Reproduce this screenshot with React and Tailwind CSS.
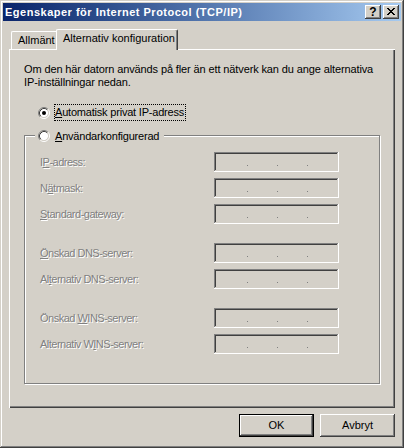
import React from "react";

// classic Win2000 bevels
const frameBevel =
  "shadow-[inset_-1px_-1px_#404040,inset_1px_1px_#d4d0c8,inset_-2px_-2px_#808080,inset_2px_2px_#ffffff]";
const raisedBevel =
  "shadow-[inset_-1px_-1px_#404040,inset_1px_1px_#ffffff,inset_-2px_-2px_#808080,inset_2px_2px_#d4d0c8]";
const sunkenBevel =
  "shadow-[inset_-1px_-1px_#ffffff,inset_1px_1px_#808080,inset_-2px_-2px_#d4d0c8,inset_2px_2px_#404040]";
const disabledText = "text-[#808080] [text-shadow:1px_1px_0_#ffffff]";

const rows = [
  [
    ["I", "P", "-adress:"],
    ["N", "ä", "tmask:"],
    ["", "S", "tandard-gateway:"],
  ],
  [
    ["", "Ö", "nskad DNS-server:"],
    ["Al", "t", "ernativ DNS-server:"],
  ],
  [
    ["Önskad ", "W", "INS-server:"],
    ["Alternativ W", "I", "NS-server:"],
  ],
];

function Radio({ checked }) {
  return (
    <svg width="12" height="12" viewBox="0 0 12 12" className="block shrink-0">
      <circle cx="6" cy="6" r="4.2" fill="#ffffff" />
      <path d="M2.11 9.89A5.5 5.5 0 0 1 9.89 2.11" fill="none" stroke="#808080" />
      <path d="M9.89 2.11A5.5 5.5 0 0 1 2.11 9.89" fill="none" stroke="#ffffff" />
      <path d="M2.82 9.18A4.5 4.5 0 0 1 9.18 2.82" fill="none" stroke="#404040" />
      <path d="M9.18 2.82A4.5 4.5 0 0 1 2.82 9.18" fill="none" stroke="#d4d0c8" />
      {checked && <circle cx="6" cy="6" r="2" fill="#000000" />}
    </svg>
  );
}

function IpField() {
  return (
    <div
      className={`flex h-[20px] w-[125px] shrink-0 items-start gap-[29px] pl-[33px] pt-[13px] ${sunkenBevel}`}
    >
      <span className="h-px w-px bg-[#808080]" />
      <span className="h-px w-px bg-[#808080]" />
      <span className="h-px w-px bg-[#808080]" />
    </div>
  );
}

function CloseGlyph() {
  return (
    <svg width="8" height="7" viewBox="0 0 8 7" shapeRendering="crispEdges">
      <path
        d="M0 0h2v1H0zM6 0h2v1H6zM1 1h2v1H1zM5 1h2v1H5zM2 2h4v1H2zM3 3h2v1H3zM2 4h4v1H2zM1 5h2v1H1zM5 5h2v1H5zM0 6h2v1H0zM6 6h2v1H6z"
        fill="#000000"
      />
    </svg>
  );
}

export default function App() {
  return (
    <div
      className={`flex h-[448px] w-[404px] flex-col bg-[#d4d0c8] p-[3px] font-['Liberation_Sans',Arial,sans-serif] text-[11px] leading-[13px] text-black ${frameBevel}`}
    >
      {/* title bar */}
      <div className="flex h-[18px] shrink-0 items-center bg-gradient-to-r from-[#0a246a] to-[#a6caf0] pl-[2px]">
        <span className="whitespace-nowrap text-[11px] font-bold tracking-[0.5px] text-white">
          Egenskaper för Internet Protocol (TCP/IP)
        </span>
        <div className="ml-auto mr-[2px] flex gap-[2px]">
          <div
            className={`flex h-[14px] w-[16px] items-center justify-center bg-[#d4d0c8] pb-[1px] text-[12px] font-bold leading-none ${raisedBevel}`}
          >
            ?
          </div>
          <div
            className={`flex h-[14px] w-[16px] items-center justify-center bg-[#d4d0c8] pb-[1px] ${raisedBevel}`}
          >
            <CloseGlyph />
          </div>
        </div>
      </div>

      {/* tabs */}
      <div className="ml-[8px] mt-[8px] flex h-[20px] items-end">
        <div className="flex h-[18px] w-[45px] items-start rounded-tl-[2px] border-l border-t border-white pl-[6px] pt-[2px]">
          Allmänt
        </div>
        <div className="relative z-10 -mb-px flex h-[21px] w-[122px] items-start rounded-t-[2px] border-l border-r border-t border-l-white border-r-[#404040] border-t-white bg-[#d4d0c8] pl-[6px] pt-[2px] shadow-[inset_-1px_0_#808080]">
          Alternativ konfiguration
        </div>
      </div>

      {/* tab panel */}
      <div
        className={`mx-[6px] flex h-[359px] shrink-0 flex-col pl-[15px] pt-[14px] shadow-[inset_1px_1px_#ffffff,inset_-1px_-1px_#404040,inset_-2px_-2px_#808080]`}
      >
        <p className="whitespace-nowrap tracking-[-0.12px]">
          Om den här datorn används på fler än ett nätverk kan du ange alternativa
          <br />
          IP-inställningar nedan.
        </p>

        <div className="ml-[14px] mt-[15px] flex h-[17px] items-center gap-[4px]">
          <Radio checked />
          <span className="h-[17px] whitespace-nowrap border border-dotted border-black pr-[1px] leading-[15px] tracking-[-0.2px]">
            <span className="underline underline-offset-[1px]">A</span>utomatisk privat IP-adress
          </span>
        </div>

        {/* group box */}
        <div className="mt-[14px] flex h-[249px] w-[356px] flex-col border border-[#808080] shadow-[inset_1px_1px_#ffffff,1px_1px_#ffffff]">
          <div className="-mt-[6px] ml-[10px] flex h-[12px] items-center gap-[5px] self-start bg-[#d4d0c8] pl-[3px] pr-[5px]">
            <Radio />
            <span className="whitespace-nowrap tracking-[-0.2px]">
              <span className="underline underline-offset-[1px]">A</span>nvändarkonfigurerad
            </span>
          </div>

          <div className="mt-[10px] flex flex-col gap-[19px]">
            {rows.map((group, gi) => (
              <div key={gi} className="flex flex-col gap-[6px]">
                {group.map(([pre, key, post]) => (
                  <div key={pre + key + post} className="flex h-[20px] items-center">
                    <span className={`w-[189px] whitespace-nowrap pl-[15px] tracking-[-0.5px] ${disabledText}`}>
                      {pre}
                      <span className="underline underline-offset-[1px]">{key}</span>
                      {post}
                    </span>
                    <IpField />
                  </div>
                ))}
              </div>
            ))}
          </div>
        </div>
      </div>

      {/* dialog buttons */}
      <div className="mt-[6px] flex justify-end gap-[6px] pr-[6px]">
        <button className="h-[23px] w-[75px] border border-black shadow-[inset_-1px_-1px_#404040,inset_1px_1px_#ffffff,inset_-2px_-2px_#808080]">
          OK
        </button>
        <button className={`h-[23px] w-[75px] ${raisedBevel}`}>Avbryt</button>
      </div>
    </div>
  );
}
